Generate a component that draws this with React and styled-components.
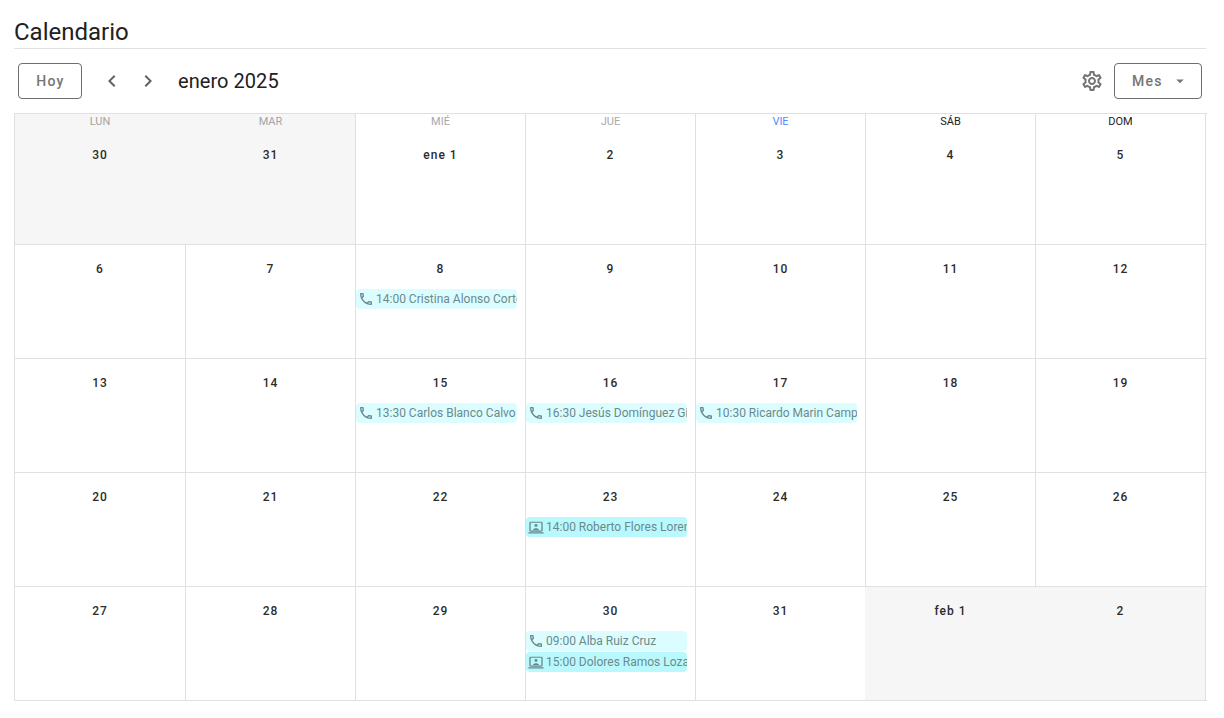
import React from "react";
import styled, { createGlobalStyle } from "styled-components";
import {
  MdOutlineCall,
  MdOutlineSettings,
  MdChevronLeft,
  MdChevronRight,
  MdArrowDropDown,
} from "react-icons/md";

const GlobalStyle = createGlobalStyle`
  html, body { margin: 0; padding: 0; background: #fff; }
  body { font-family: Roboto, "Liberation Sans", sans-serif; color: #212121; }
`;

const weekDays = [
  { label: "LUN", color: "#a8a29e" },
  { label: "MAR", color: "#a3a3ab" },
  { label: "MIÉ", color: "#a8a8a8" },
  { label: "JUE", color: "#a8a8a8" },
  { label: "VIE", color: "#4f8cff" },
  { label: "SÁB", color: "#212121" },
  { label: "DOM", color: "#212121" },
];

const weeks = [
  [
    { day: "30", muted: true },
    { day: "31", muted: true },
    { day: "ene 1" },
    { day: "2" },
    { day: "3" },
    { day: "4" },
    { day: "5" },
  ],
  [
    { day: "6" },
    { day: "7" },
    { day: "8", events: [{ type: "call", text: "14:00 Cristina Alonso Cortés" }] },
    { day: "9" },
    { day: "10" },
    { day: "11" },
    { day: "12" },
  ],
  [
    { day: "13" },
    { day: "14" },
    { day: "15", events: [{ type: "call", text: "13:30 Carlos Blanco Calvo" }] },
    { day: "16", events: [{ type: "call", text: "16:30 Jesús Domínguez Gil" }] },
    { day: "17", events: [{ type: "call", text: "10:30 Ricardo Marin Campos" }] },
    { day: "18" },
    { day: "19" },
  ],
  [
    { day: "20" },
    { day: "21" },
    { day: "22" },
    { day: "23", events: [{ type: "online", text: "14:00 Roberto Flores Lorenzo" }] },
    { day: "24" },
    { day: "25" },
    { day: "26" },
  ],
  [
    { day: "27" },
    { day: "28" },
    { day: "29" },
    {
      day: "30",
      events: [
        { type: "call", text: "09:00 Alba Ruiz Cruz" },
        { type: "online", text: "15:00 Dolores Ramos Lozano" },
      ],
    },
    { day: "31", noLine: true },
    { day: "feb 1", muted: true },
    { day: "2", muted: true },
  ],
];

// laptop with a person on screen, not in the icon packs
const OnlineIcon = () => (
  <svg width="16" height="16" viewBox="0 0 24 24" fill="currentColor">
    <path d="M4 4h16a2 2 0 0 1 2 2v11a2 2 0 0 1-2 2H4a2 2 0 0 1-2-2V6a2 2 0 0 1 2-2zm0 1.6V17.4h16V5.6H4z" />
    <path d="M.5 20h23v1.8H.5z" />
    <circle cx="12" cy="9.8" r="2.2" />
    <path d="M7.5 17v-.9c0-1.6 3-2.4 4.5-2.4s4.5.8 4.5 2.4v.9h-9z" />
  </svg>
);

const App = () => {
  return (
    <Page>
      <GlobalStyle />
      <Title>Calendario</Title>
      <Toolbar>
        <ToolGroup>
          <OutlineButton>Hoy</OutlineButton>
          <NavGroup>
            <NavButton aria-label="Anterior">
              <MdChevronLeft size={24} />
            </NavButton>
            <NavButton aria-label="Siguiente">
              <MdChevronRight size={24} />
            </NavButton>
          </NavGroup>
          <Month>enero 2025</Month>
        </ToolGroup>
        <ToolGroup>
          <SettingsButton aria-label="Ajustes">
            <MdOutlineSettings size={24} />
          </SettingsButton>
          <ViewButton>
            Mes
            <MdArrowDropDown size={18} />
          </ViewButton>
        </ToolGroup>
      </Toolbar>
      <Calendar>
        {weeks.map((week, w) => (
          <Week key={w} $first={w === 0}>
            {week.map((cell, d) => (
              <Cell key={d} $muted={cell.muted} $nextMuted={week[d + 1]?.muted} $noLine={cell.noLine}>
                {w === 0 && <WeekDay $color={weekDays[d].color}>{weekDays[d].label}</WeekDay>}
                <DayNumber>{cell.day}</DayNumber>
                {cell.events && (
                  <Events>
                    {cell.events.map((ev) => (
                      <Event key={ev.text} $type={ev.type}>
                        <EventIcon>
                          {ev.type === "call" ? <MdOutlineCall size={16} /> : <OnlineIcon />}
                        </EventIcon>
                        <EventText>{ev.text}</EventText>
                      </Event>
                    ))}
                  </Events>
                )}
              </Cell>
            ))}
          </Week>
        ))}
      </Calendar>
    </Page>
  );
};

const Page = styled.div`
  width: 1224px;
  height: 718px;
  box-sizing: border-box;
  padding: 14px 18px 0 14px;
  overflow: hidden;
`;

const Title = styled.h1`
  margin: 0;
  height: 34px;
  font-size: 24px;
  line-height: 36px;
  font-weight: 400;
  color: #212121;
  border-bottom: 1px solid #e0e0e0;
`;

const Toolbar = styled.div`
  display: flex;
  align-items: center;
  justify-content: space-between;
  height: 64px;
  padding: 0 4px;
`;

const ToolGroup = styled.div`
  display: flex;
  align-items: center;
`;

const OutlineButton = styled.button`
  box-sizing: border-box;
  width: 64px;
  height: 36px;
  padding: 0 0 0 1px;
  background: #fff;
  border: 1px solid #6e6e6e;
  border-radius: 4px;
  font-family: inherit;
  font-size: 14px;
  font-weight: 500;
  letter-spacing: 1.25px;
  color: #757575;
`;

const NavGroup = styled.div`
  display: flex;
  gap: 12px;
  margin: 0 18px;
`;

const NavButton = styled.button`
  display: flex;
  width: 24px;
  height: 24px;
  padding: 0;
  border: 0;
  background: none;
  color: #5f6368;
`;

const Month = styled.div`
  font-size: 20px;
  line-height: 28px;
  color: #212121;
  letter-spacing: 0.05px;
`;

const SettingsButton = styled.button`
  display: flex;
  padding: 0;
  border: 0;
  background: none;
  color: #757575;
  margin-right: 10px;
`;

const ViewButton = styled(OutlineButton)`
  display: flex;
  align-items: center;
  justify-content: space-between;
  width: 88px;
  padding: 0 12px 0 17px;
`;

const Calendar = styled.div`
  border-top: 1px solid #e0e0e0;
  border-left: 1px solid #e0e0e0;
  width: 1192px;
`;

const Week = styled.div`
  display: grid;
  grid-template-columns: 171px repeat(6, 170px);
  height: ${(p) => (p.$first ? "131px" : "114px")};
  box-sizing: border-box;
  border-bottom: 1px solid #e0e0e0;
`;

const Cell = styled.div`
  box-sizing: border-box;
  min-width: 0;
  background: ${(p) => (p.$muted ? "#f6f6f6" : "#fff")};
  border-right: 1px solid
    ${(p) => {
      if (p.$noLine) return "#f6f6f6";
      return p.$muted && p.$nextMuted ? "#f6f6f6" : "#e0e0e0";
    }};
`;

const WeekDay = styled.div`
  height: 17px;
  font-size: 11px;
  line-height: 15px;
  text-align: center;
  color: ${(p) => p.$color};
`;

const DayNumber = styled.div`
  margin-top: 14px;
  height: 20px;
  font-size: 12px;
  line-height: 20px;
  font-weight: 500;
  letter-spacing: 1px;
  text-align: center;
  color: #2c2c2c;
`;

const Events = styled.div`
  display: flex;
  flex-direction: column;
  gap: 1px;
  margin-top: 10px;
  width: 161px;
`;

const Event = styled.div`
  display: flex;
  align-items: center;
  height: 20px;
  padding-left: 2px;
  border-radius: 4px;
  overflow: hidden;
  font-size: 12px;
  color: #6b8a8c;
  background: ${(p) => (p.$type === "call" ? "#dcfdff" : "#b9f9fd")};
`;

const EventIcon = styled.span`
  display: flex;
  flex: 0 0 18px;
  color: #6a8a8d;
`;

const EventText = styled.span`
  white-space: nowrap;
  overflow: hidden;
`;

export default App;
